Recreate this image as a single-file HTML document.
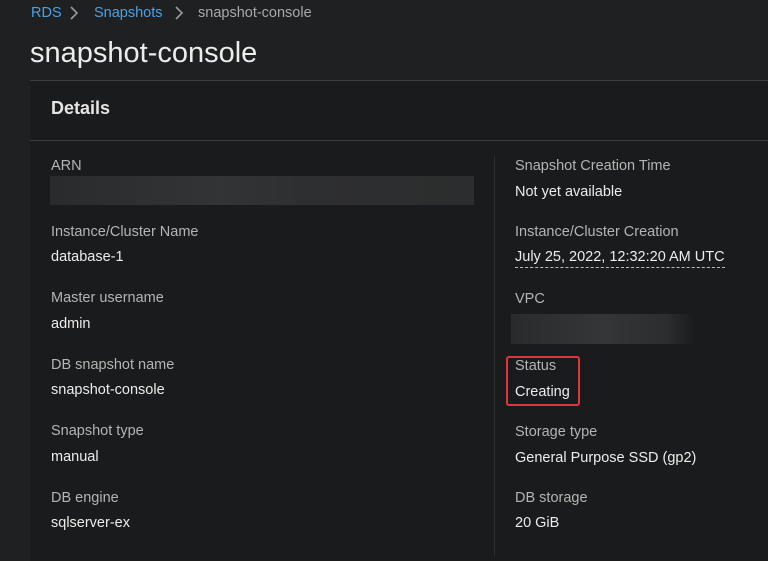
<!DOCTYPE html>
<html><head><meta charset="utf-8"><style>
html,body{margin:0;padding:0;width:768px;height:553px;overflow:hidden;background:#1e2021;font-family:"Liberation Sans",sans-serif;}
.a{position:absolute;white-space:nowrap}
.panel{position:absolute;left:30px;top:80px;width:760px;height:480px;background:#1a1b1c;border-top:1px solid #3a3c3e}
.lab{font-size:14.5px;color:#b4b4b4}
.val{font-size:14.5px;color:#ececec}
</style></head><body>
<div class="a" style="left:31px;top:5px;font-size:14.5px;color:#44a3e8">RDS</div>
<svg class="a" style="left:68px;top:5px" width="12" height="16"><path d="M3 2 L9 8 L3 14" stroke="#9a9a9a" stroke-width="1.6" fill="none"/></svg>
<div class="a" style="left:94px;top:5px;font-size:14.5px;color:#44a3e8">Snapshots</div>
<svg class="a" style="left:173px;top:5px" width="12" height="16"><path d="M3 2 L9 8 L3 14" stroke="#9a9a9a" stroke-width="1.6" fill="none"/></svg>
<div class="a" style="left:198px;top:5px;font-size:14.5px;color:#a8a8a8">snapshot-console</div>
<div class="a" style="left:30px;top:37px;font-size:29px;color:#ececec">snapshot-console</div>
<div class="panel"></div>
<div class="a" style="left:30px;top:140px;width:740px;height:1px;background:#3a3c3e"></div>
<div class="a" style="left:51px;top:98px;font-size:18px;font-weight:bold;color:#e4e4e4">Details</div>
<div class="a" style="left:494px;top:156px;width:1px;height:400px;background:#2e3032"></div>

<div class="a lab" style="left:51px;top:158px">ARN</div>
<div class="a" style="left:50px;top:176px;width:424px;height:29px;background:linear-gradient(90deg,#2a2b2c,#333435 40%,#2e2f30 60%,#2c2d2e)"></div>
<div class="a lab" style="left:51px;top:224px">Instance/Cluster Name</div>
<div class="a val" style="left:51px;top:249px">database-1</div>
<div class="a lab" style="left:51px;top:290px">Master username</div>
<div class="a val" style="left:51px;top:316px">admin</div>
<div class="a lab" style="left:51px;top:357px">DB snapshot name</div>
<div class="a val" style="left:51px;top:382px">snapshot-console</div>
<div class="a lab" style="left:51px;top:423px">Snapshot type</div>
<div class="a val" style="left:51px;top:449px">manual</div>
<div class="a lab" style="left:51px;top:490px">DB engine</div>
<div class="a val" style="left:51px;top:515px">sqlserver-ex</div>

<div class="a lab" style="left:515px;top:158px">Snapshot Creation Time</div>
<div class="a val" style="left:515px;top:184px">Not yet available</div>
<div class="a lab" style="left:515px;top:224px">Instance/Cluster Creation</div>
<div class="a val" style="left:515px;top:249px;border-bottom:1px dashed #bbb;padding-bottom:2px">July 25, 2022, 12:32:20 AM UTC</div>
<div class="a lab" style="left:515px;top:291px">VPC</div>
<div class="a" style="left:511px;top:314px;width:184px;height:30px;background:linear-gradient(90deg,#2a2b2c,#353637 50%,#2c2d2e 85%,#1a1b1c)"></div>
<div class="a" style="left:506px;top:356px;width:70px;height:46px;border:2px solid #e0353a;border-radius:3px"></div>
<div class="a lab" style="left:515px;top:358px">Status</div>
<div class="a val" style="left:515px;top:384px">Creating</div>
<div class="a lab" style="left:515px;top:424px">Storage type</div>
<div class="a val" style="left:515px;top:450px">General Purpose SSD (gp2)</div>
<div class="a lab" style="left:515px;top:490px">DB storage</div>
<div class="a val" style="left:515px;top:515px">20 GiB</div>
</body></html>
